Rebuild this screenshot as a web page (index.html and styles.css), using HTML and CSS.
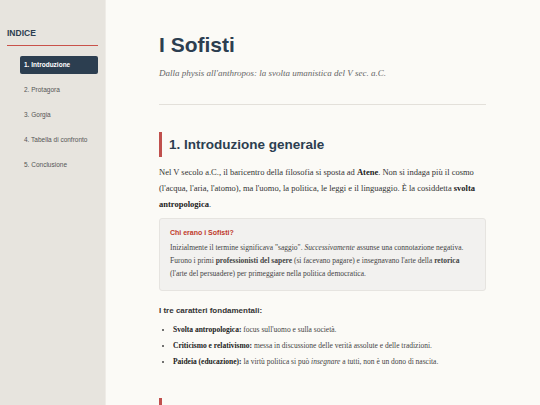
FILE: index.html
```html
<!DOCTYPE html>
<html lang="it">
<head>
<meta charset="utf-8">
<title>I Sofisti</title>
<link rel="stylesheet" href="styles.css">
</head>
<body>
<aside class="sidebar">
  <div class="side-title">INDICE</div>
  <nav class="nav">
    <a class="nav-item active">1. Introduzione</a>
    <a class="nav-item">2. Protagora</a>
    <a class="nav-item">3. Gorgia</a>
    <a class="nav-item">4. Tabella di confronto</a>
    <a class="nav-item">5. Conclusione</a>
  </nav>
</aside>
<main class="main">
  <div class="content">
    <header class="header">
      <h1 class="title">I Sofisti</h1>
      <p class="subtitle">Dalla physis all'anthropos: la svolta umanistica del V sec. a.C.</p>
    </header>
    <section class="section">
      <h2 class="h2">1. Introduzione generale</h2>
      <p class="para">Nel V secolo a.C., il baricentro della filosofia si sposta ad <b>Atene</b>. Non si indaga più il cosmo (l'acqua, l'aria, l'atomo), ma l'uomo, la politica, le leggi e il linguaggio. È la cosiddetta <b>svolta antropologica</b>.</p>
      <div class="callout">
        <div class="callout-title">Chi erano i Sofisti?</div>
        <p class="callout-text">Inizialmente il termine significava "saggio". <i>Successivamente</i> assunse una connotazione negativa. Furono i primi <b>professionisti del sapere</b> (si facevano pagare) e insegnavano l'arte della <b>retorica</b> (l'arte del persuadere) per primeggiare nella politica democratica.</p>
      </div>
      <h3 class="h3">I tre caratteri fondamentali:</h3>
      <ul class="list">
        <li><b>Svolta antropologica:</b> focus sull'uomo e sulla società.</li>
        <li><b>Criticismo e relativismo:</b> messa in discussione delle verità assolute e delle tradizioni.</li>
        <li><b>Paideia (educazione):</b> la virtù politica si può <i>insegnare</i> a tutti, non è un dono di nascita.</li>
      </ul>
    </section>
    <section class="section next">
      <h2 class="h2">2. Protagora</h2>
    </section>
  </div>
</main>
</body>
</html>
```

FILE: styles.css
```css
* { box-sizing: border-box; }
html, body { margin: 0; padding: 0; }
body {
  width: 540px;
  height: 405px;
  overflow: hidden;
  display: flex;
  background: #fbfaf6;
  font-family: "Liberation Serif", serif;
  color: #333;
}
.sidebar {
  width: 106px;
  flex: none;
  background: #e7e4de;
  border-right: 1px solid #efece7;
  padding: 28px 7px 0 7px;
}
.side-title {
  font-family: "Liberation Sans", Arial, sans-serif;
  font-weight: bold;
  font-size: 8.5px;
  color: #2c3e50;
  padding-bottom: 7px;
  border-bottom: 1px solid #c9524a;
}
.nav {
  display: flex;
  flex-direction: column;
  gap: 7px;
  padding: 10px 0 0 13px;
}
.nav-item {
  display: block;
  height: 18px;
  line-height: 18px;
  padding-left: 4px;
  font-family: "Liberation Sans", Arial, sans-serif;
  font-size: 6.5px;
  color: #555;
  border-radius: 2px;
}
.nav-item.active {
  background: #2c3e50;
  color: #fff;
  font-weight: bold;
}
.main {
  flex: 1;
  padding: 0 54px 0 53px;
}
.content {
  width: 327px;
}
.header {
  padding-top: 32px;
  padding-bottom: 26px;
  border-bottom: 1px solid #e3e0da;
}
.title {
  margin: 0;
  font-family: "Liberation Sans", Arial, sans-serif;
  font-size: 21px;
  line-height: 26px;
  color: #2c3e50;
}
.subtitle {
  margin: 10px 0 0 0;
  font-style: italic;
  font-size: 9px;
  color: #666;
}
.section { padding-top: 27px; }
.h2 {
  margin: 0;
  border-left: 3px solid #c0504d;
  padding-left: 7px;
  height: 25px;
  line-height: 25px;
  font-family: "Liberation Sans", Arial, sans-serif;
  font-size: 13.5px;
  color: #2c3e50;
}
.para {
  margin: 7px 0 0 0;
  font-size: 8.5px;
  line-height: 16px;
  color: #333;
}
.para b { color: #222; }
.callout {
  margin-top: 6px;
  background: #f2f1ef;
  border: 1px solid #e6e4e0;
  border-radius: 3px;
  padding: 9px 10px 10px 10px;
}
.callout-title {
  font-family: "Liberation Sans", Arial, sans-serif;
  font-weight: bold;
  font-size: 7px;
  color: #c0392b;
  line-height: 10px;
}
.callout-text {
  margin: 3px 0 0 0;
  font-size: 7.5px;
  line-height: 13px;
  color: #444;
}
.h3 {
  margin: 14px 0 0 0;
  font-family: "Liberation Sans", Arial, sans-serif;
  font-size: 8px;
  font-weight: bold;
  color: #333;
  line-height: 12px;
}
.list {
  margin: 5px 0 0 0;
  padding-left: 14px;
  font-size: 7.5px;
  line-height: 16px;
  color: #444;
}
.list b { color: #222; }
.section.next { padding-top: 28px; }
```
